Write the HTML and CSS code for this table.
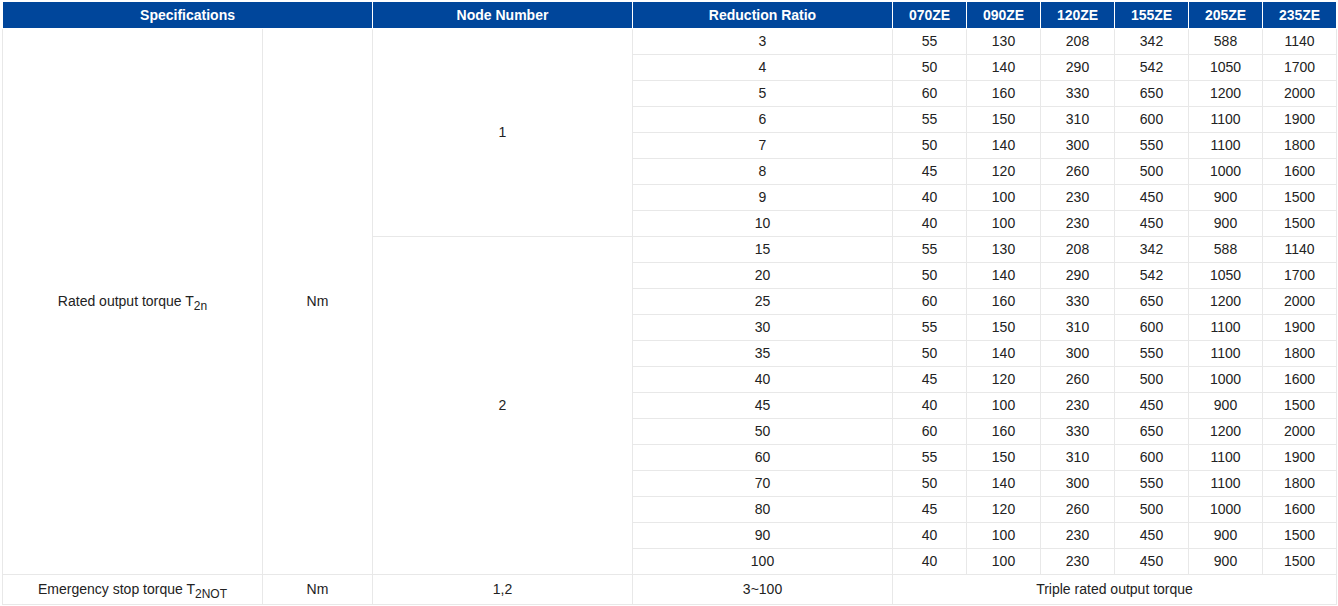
FILE: index.html
```html
<!DOCTYPE html>
<html>
<head>
<meta charset="utf-8">
<link rel="stylesheet" href="styles.css">
</head>
<body>
<div class="wrap">
<table class="spec">
<colgroup>
<col class="c-spec"><col class="c-unit"><col class="c-node"><col class="c-ratio">
<col class="c-m"><col class="c-m"><col class="c-m"><col class="c-m"><col class="c-m"><col class="c-m">
</colgroup>
<thead>
<tr><th colspan="2">Specifications</th><th>Node Number</th><th>Reduction Ratio</th><th>070ZE</th><th>090ZE</th><th>120ZE</th><th>155ZE</th><th>205ZE</th><th>235ZE</th></tr>
</thead>
<tbody>
<tr><td rowspan="21">Rated output torque T<sub>2n</sub></td><td rowspan="21">Nm</td><td rowspan="8">1</td><td>3</td><td>55</td><td>130</td><td>208</td><td>342</td><td>588</td><td>1140</td></tr>
<tr><td>4</td><td>50</td><td>140</td><td>290</td><td>542</td><td>1050</td><td>1700</td></tr>
<tr><td>5</td><td>60</td><td>160</td><td>330</td><td>650</td><td>1200</td><td>2000</td></tr>
<tr><td>6</td><td>55</td><td>150</td><td>310</td><td>600</td><td>1100</td><td>1900</td></tr>
<tr><td>7</td><td>50</td><td>140</td><td>300</td><td>550</td><td>1100</td><td>1800</td></tr>
<tr><td>8</td><td>45</td><td>120</td><td>260</td><td>500</td><td>1000</td><td>1600</td></tr>
<tr><td>9</td><td>40</td><td>100</td><td>230</td><td>450</td><td>900</td><td>1500</td></tr>
<tr><td>10</td><td>40</td><td>100</td><td>230</td><td>450</td><td>900</td><td>1500</td></tr>
<tr><td rowspan="13">2</td><td>15</td><td>55</td><td>130</td><td>208</td><td>342</td><td>588</td><td>1140</td></tr>
<tr><td>20</td><td>50</td><td>140</td><td>290</td><td>542</td><td>1050</td><td>1700</td></tr>
<tr><td>25</td><td>60</td><td>160</td><td>330</td><td>650</td><td>1200</td><td>2000</td></tr>
<tr><td>30</td><td>55</td><td>150</td><td>310</td><td>600</td><td>1100</td><td>1900</td></tr>
<tr><td>35</td><td>50</td><td>140</td><td>300</td><td>550</td><td>1100</td><td>1800</td></tr>
<tr><td>40</td><td>45</td><td>120</td><td>260</td><td>500</td><td>1000</td><td>1600</td></tr>
<tr><td>45</td><td>40</td><td>100</td><td>230</td><td>450</td><td>900</td><td>1500</td></tr>
<tr><td>50</td><td>60</td><td>160</td><td>330</td><td>650</td><td>1200</td><td>2000</td></tr>
<tr><td>60</td><td>55</td><td>150</td><td>310</td><td>600</td><td>1100</td><td>1900</td></tr>
<tr><td>70</td><td>50</td><td>140</td><td>300</td><td>550</td><td>1100</td><td>1800</td></tr>
<tr><td>80</td><td>45</td><td>120</td><td>260</td><td>500</td><td>1000</td><td>1600</td></tr>
<tr><td>90</td><td>40</td><td>100</td><td>230</td><td>450</td><td>900</td><td>1500</td></tr>
<tr><td>100</td><td>40</td><td>100</td><td>230</td><td>450</td><td>900</td><td>1500</td></tr>
<tr class="last"><td>Emergency stop torque T<sub>2NOT</sub></td><td>Nm</td><td>1,2</td><td>3~100</td><td colspan="6">Triple rated output torque</td></tr>
</tbody>
</table>
</div>
</body>
</html>
```

FILE: styles.css
```css
html, body {
  margin: 0;
  padding: 0;
  background: #ffffff;
}
.wrap {
  padding: 2px 0 0 2px;
}
.spec {
  border-collapse: collapse;
  table-layout: fixed;
  width: 1334px;
  font-family: "Liberation Sans", Arial, sans-serif;
  font-size: 14px;
  color: #222222;
}
.c-spec { width: 260px; }
.c-unit { width: 110px; }
.c-node { width: 260px; }
.c-ratio { width: 260px; }
.c-m { width: 74px; }
.spec th {
  background: #00469b;
  color: #ffffff;
  font-weight: bold;
  height: 26px;
  padding: 0;
  border: 1px solid #ffffff;
  border-top: none;
  text-align: center;
  vertical-align: middle;
}
.spec td {
  height: 24px;
  padding: 0 0 1px;
  border: 1px solid #e8e8e8;
  text-align: center;
  vertical-align: middle;
  line-height: 16px;
}
.spec sub {
  font-size: 12px;
  line-height: 0;
  vertical-align: -4px;
}
.spec tr.last td {
  height: 27px;
  padding-bottom: 2px;
}
```
